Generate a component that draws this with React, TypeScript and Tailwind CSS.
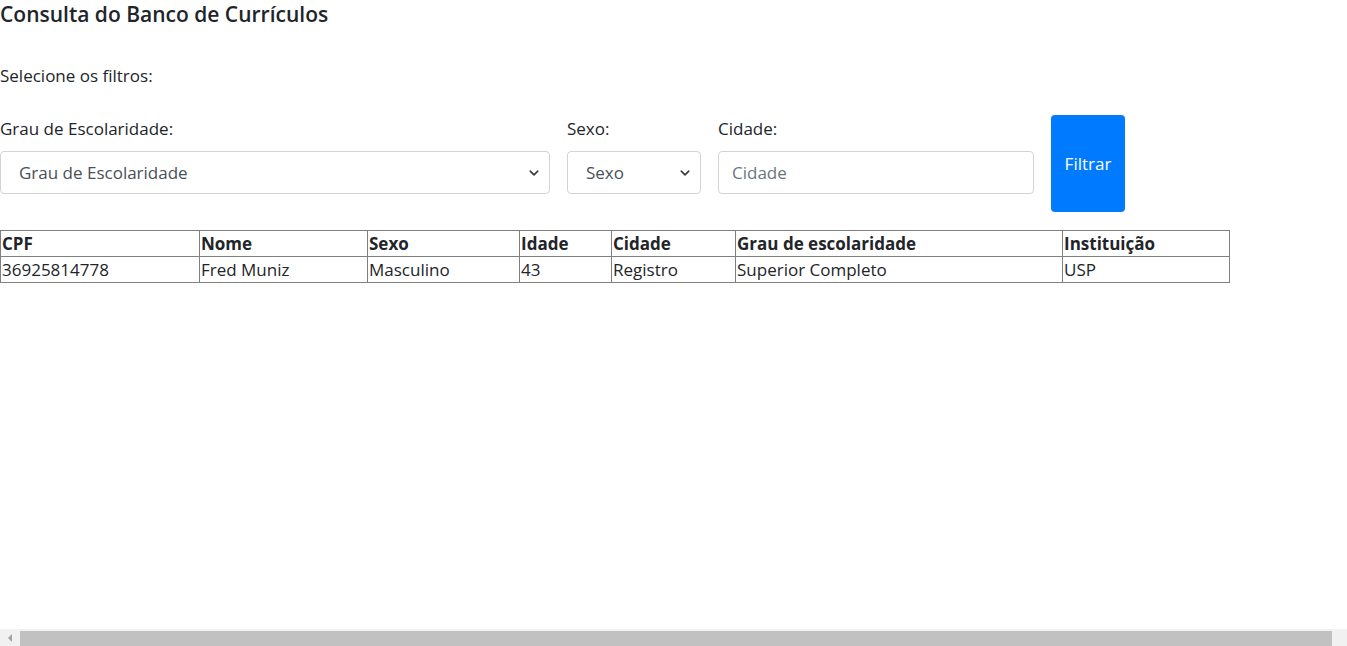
import React from "react";

const rows = [
  {
    cpf: "36925814778",
    nome: "Fred Muniz",
    sexo: "Masculino",
    idade: "43",
    cidade: "Registro",
    grau: "Superior Completo",
    inst: "USP",
  },
];

const cols = [
  { label: "CPF", w: "w-[199px]" },
  { label: "Nome", w: "w-[168px]" },
  { label: "Sexo", w: "w-[152px]" },
  { label: "Idade", w: "w-[92px]" },
  { label: "Cidade", w: "w-[124px]" },
  { label: "Grau de escolaridade", w: "w-[327px]" },
  { label: "Instituição", w: "w-[167px]" },
];

const Chevron = () => (
  <svg
    className="pointer-events-none absolute right-[11px] top-1/2 -translate-y-1/2"
    width="10"
    height="10"
    viewBox="0 0 16 16"
  >
    <path
      d="M2 5l6 6 6-6"
      fill="none"
      stroke="#343a40"
      strokeWidth="2.5"
      strokeLinecap="round"
      strokeLinejoin="round"
    />
  </svg>
);

export default function App() {
  return (
    <div className="flex h-[646px] w-full flex-col overflow-hidden bg-white">
      <div
        className="flex-1 text-[#212529]"
        style={{ fontFamily: '"Open Sans", "Noto Sans", sans-serif' }}
      >
        <h5 className="pt-[1px] text-[21px] font-semibold leading-[26px]">
          Consulta do Banco de Currículos
        </h5>

        <p className="mt-[36px] text-[17px] leading-[26px]">Selecione os filtros:</p>

        <div className="mt-[26px] flex items-start gap-[17px]">
          <div className="w-[550px]">
            <label className="block pt-[1px] text-[17px] leading-[26px]">
              Grau de Escolaridade:
            </label>
            <div className="relative mt-[9px]">
              <select className="h-[43px] w-full appearance-none rounded-[4px] border border-[#ced4da] bg-white pl-[18px] text-[17px] text-[#495057]">
                <option>Grau de Escolaridade</option>
              </select>
              <Chevron />
            </div>
          </div>

          <div className="w-[134px]">
            <label className="block pt-[1px] text-[17px] leading-[26px]">Sexo:</label>
            <div className="relative mt-[9px]">
              <select className="h-[43px] w-full appearance-none rounded-[4px] border border-[#ced4da] bg-white pl-[18px] text-[17px] text-[#495057]">
                <option>Sexo</option>
              </select>
              <Chevron />
            </div>
          </div>

          <div className="w-[316px]">
            <label className="block pt-[1px] text-[17px] leading-[26px]">Cidade:</label>
            <input
              placeholder="Cidade"
              className="mt-[9px] h-[43px] w-full rounded-[4px] border border-[#ced4da] bg-white px-[13px] text-[17px] text-[#495057] outline-none placeholder:text-[#6c757d]"
            />
          </div>

          <button className="h-[97px] w-[74px] rounded-[4px] bg-[#007bff] text-[17px] text-white">
            Filtrar
          </button>
        </div>

        <table className="mt-[18px] w-[1230px] table-fixed border-collapse text-[17px] leading-[25px]">
          <thead>
            <tr>
              {cols.map((c) => (
                <th
                  key={c.label}
                  className={`${c.w} border border-[#808080] px-[1px] text-left font-bold`}
                >
                  {c.label}
                </th>
              ))}
            </tr>
          </thead>
          <tbody>
            {rows.map((r) => (
              <tr key={r.cpf}>
                <td className="border border-[#808080] px-[1px]">{r.cpf}</td>
                <td className="border border-[#808080] px-[1px]">{r.nome}</td>
                <td className="border border-[#808080] border-l-[#333] px-[1px]">{r.sexo}</td>
                <td className="border border-[#808080] px-[1px]">{r.idade}</td>
                <td className="border border-[#808080] px-[1px]">{r.cidade}</td>
                <td className="border border-[#808080] px-[1px]">{r.grau}</td>
                <td className="border border-[#808080] px-[1px]">{r.inst}</td>
              </tr>
            ))}
          </tbody>
        </table>
      </div>

      {/* horizontal scrollbar */}
      <div className="flex h-[17px] shrink-0 items-end bg-[#f1f1f1]">
        <div className="flex h-full w-[20px] items-center justify-center">
          <svg width="5" height="8" viewBox="0 0 5 8">
            <path d="M4 0L0 4l4 4z" fill="#a3a3a3" />
          </svg>
        </div>
        <div className="h-[15px] flex-1 bg-[#c1c1c1]" />
        <div className="h-full w-[15px]" />
      </div>
    </div>
  );
}
